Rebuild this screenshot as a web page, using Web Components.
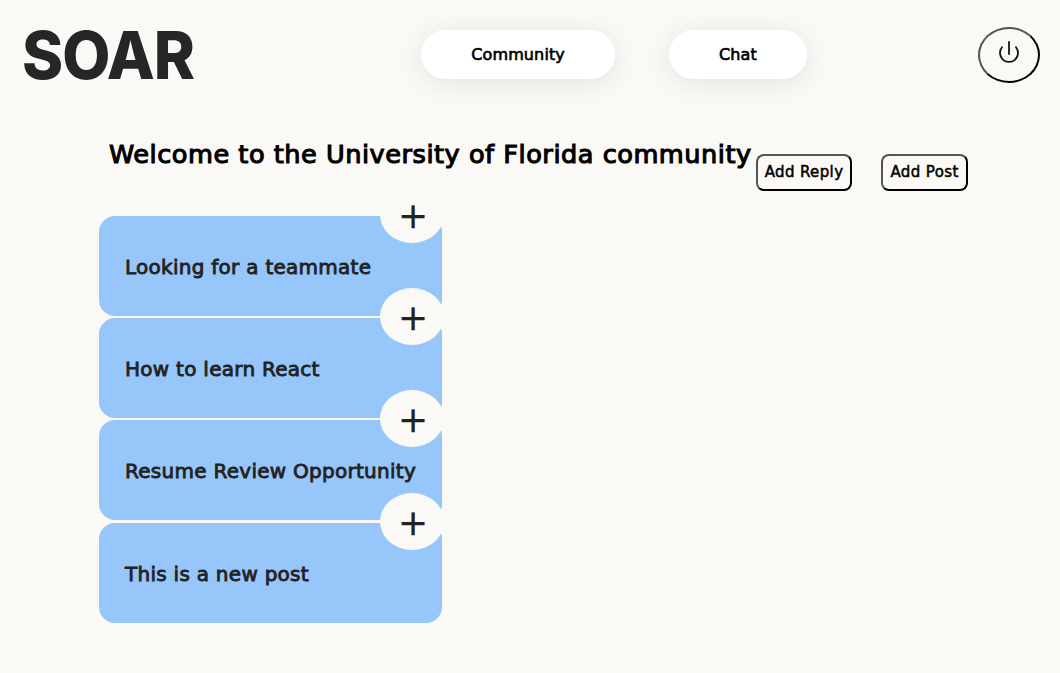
<!DOCTYPE html>
<html>
<head>
<meta charset="utf-8">
<title>SOAR</title>
<style>
    html, body { margin: 0; height: 100%; }
    body { background: #fbf9f5; font-family: "DejaVu Sans", sans-serif; }
</style>
</head>
<body>
<soar-header></soar-header>
<community-page>
    <post-card>Looking for a teammate</post-card>
    <post-card>How to learn React</post-card>
    <post-card>Resume Review Opportunity</post-card>
    <post-card>This is a new post</post-card>
</community-page>

<script>
class NavPill extends HTMLElement {
    connectedCallback() {
        this.attachShadow({ mode: 'open' });
        this.shadowRoot.innerHTML = `
            <style>
                :host {
                    display: flex;
                    align-items: center;
                    justify-content: center;
                    height: 49px;
                    padding: 0 50px;
                    background: #fff;
                    border-radius: 25px;
                    box-shadow: 0 4px 28px rgba(0, 0, 0, 0.09);
                    font-size: 16px;
                    letter-spacing: 0.12px;
                    -webkit-text-stroke: 0.65px #000;
                    color: #000;
                }
            </style>
            <slot></slot>
        `;
    }
}

class SmallButton extends HTMLElement {
    connectedCallback() {
        this.attachShadow({ mode: 'open' });
        this.shadowRoot.innerHTML = `
            <style>
                :host {
                    display: block;
                    padding: 8px 7px;
                    border: 2px outset #000;
                    border-radius: 8px;
                    font-size: 15px;
                    letter-spacing: 0.38px;
                    -webkit-text-stroke: 0.5px #000;
                    line-height: 17px;
                    color: #000;
                }
            </style>
            <slot></slot>
        `;
    }
}

class PowerButton extends HTMLElement {
    connectedCallback() {
        this.attachShadow({ mode: 'open' });
        this.shadowRoot.innerHTML = `
            <style>
                :host {
                    display: flex;
                    align-items: center;
                    justify-content: center;
                    box-sizing: border-box;
                    width: 62px;
                    height: 56px;
                    border: 2px outset #000;
                    border-radius: 50%;
                }
                svg { display: block; margin-bottom: 4px; }
            </style>
            <svg width="22" height="24" viewBox="0 0 22 24" fill="none" stroke="#111" stroke-width="1.8" stroke-linecap="round">
                <path d="M11 1V13"/>
                <path d="M4 6.3A9 9 0 1 0 18 6.3"/>
            </svg>
        `;
    }
}

class SoarHeader extends HTMLElement {
    connectedCallback() {
        this.attachShadow({ mode: 'open' });
        this.shadowRoot.innerHTML = `
            <style>
                :host {
                    display: flex;
                    align-items: center;
                    justify-content: space-between;
                    height: 110px;
                    padding: 0 20px 0 22px;
                    box-sizing: border-box;
                }
                .logo {
                    font-family: Inter, "Liberation Sans", sans-serif;
                    font-size: 66px;
                    font-weight: 800;
                    letter-spacing: -1px;
                    line-height: 1;
                    color: #262626;
                    transform: scaleX(0.945);
                    transform-origin: left center;
                }
                nav {
                    display: flex;
                    gap: 54px;
                    margin: 0 0 2px 46px;
                }
            </style>
            <div class="logo">SOAR</div>
            <nav>
                <nav-pill>Community</nav-pill>
                <nav-pill>Chat</nav-pill>
            </nav>
            <power-button></power-button>
        `;
    }
}

class CommunityPage extends HTMLElement {
    connectedCallback() {
        this.attachShadow({ mode: 'open' });
        this.shadowRoot.innerHTML = `
            <style>
                :host {
                    display: block;
                    padding: 25px 0 0 99px;
                }
                .top {
                    display: flex;
                    align-items: flex-start;
                    padding-left: 10px;
                    height: 80.6px;
                }
                h1 {
                    margin: 0;
                    font-size: 25.6px;
                    line-height: 38px;
                    font-weight: 400;
                    letter-spacing: 0.52px;
                    -webkit-text-stroke: 1.1px #000;
                    color: #000;
                }
                .actions {
                    display: flex;
                    gap: 29px;
                    margin: 19.4px 0 0 4px;
                }
                .posts {
                    display: flex;
                    flex-direction: column;
                    gap: 2.4px;
                    width: 343px;
                }
            </style>
            <div class="top">
                <h1>Welcome to the University of Florida community</h1>
                <div class="actions">
                    <small-button>Add Reply</small-button>
                    <small-button>Add Post</small-button>
                </div>
            </div>
            <div class="posts"><slot></slot></div>
        `;
    }
}

class PostCard extends HTMLElement {
    connectedCallback() {
        this.attachShadow({ mode: 'open' });
        this.shadowRoot.innerHTML = `
            <style>
                :host {
                    display: flex;
                    align-items: center;
                    position: relative;
                    box-sizing: border-box;
                    height: 100px;
                    padding: 2px 0 0 26px;
                    background: #97c6fa;
                    border-radius: 16px;
                    font-size: 20px;
                    letter-spacing: 0.27px;
                    -webkit-text-stroke: 0.85px #222;
                    white-space: nowrap;
                    color: #222;
                }
                .add {
                    position: absolute;
                    top: -30px;
                    right: -2px;
                    box-sizing: border-box;
                    width: 64px;
                    height: 57px;
                    padding: 3px 0 0 2px;
                    border-radius: 50%;
                    background: #fbf9f5;
                    display: flex;
                    align-items: center;
                    justify-content: center;
                    font-size: 36px;
                    line-height: 1;
                    letter-spacing: 0;
                    -webkit-text-stroke: 0.3px #222;
                    color: #222;
                }
            </style>
            <slot></slot>
            <span class="add">+</span>
        `;
    }
}

customElements.define('nav-pill', NavPill);
customElements.define('small-button', SmallButton);
customElements.define('power-button', PowerButton);
customElements.define('soar-header', SoarHeader);
customElements.define('community-page', CommunityPage);
customElements.define('post-card', PostCard);
</script>
</body>
</html>
